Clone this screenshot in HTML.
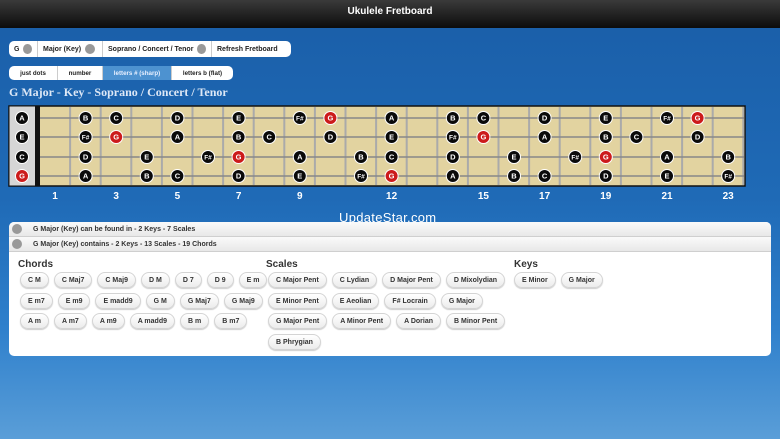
<!DOCTYPE html>
<html><head><meta charset="utf-8"><style>
*{margin:0;padding:0;box-sizing:border-box}
body{width:780px;height:439px;overflow:hidden;font-family:"Liberation Sans",Arial,sans-serif;background:linear-gradient(180deg,#1a5ea8 0%,#1f6ab6 45%,#2f80cc 75%,#5a9ed8 100%);position:relative}
.hdr{position:absolute;left:0;top:0;width:780px;height:28px;background:linear-gradient(#3a3a3a,#0c0c0c);color:#fff;font-weight:bold;font-size:10px;text-align:center;line-height:24px}
.bar{position:absolute;background:#fff;border-radius:5px;display:flex;align-items:center;font-size:7px;font-weight:bold;color:#222;overflow:hidden;white-space:nowrap}
.bar span{display:flex;align-items:center;height:100%;padding:0 5px;border-right:1px solid #ccc;white-space:nowrap;flex-shrink:0}
.bar span:last-child{border-right:none}
.dot{display:inline-block;width:10px;height:10px;border-radius:50%;background:#999;margin-left:4px}
.ttl{position:absolute;left:9px;top:85px;font-family:"Liberation Serif",serif;font-weight:bold;font-size:12px;color:#dde8f6}
.fn{position:absolute;top:191px;color:#fff;font-weight:bold;font-size:10px;width:20px;text-align:center}
.panel{position:absolute;left:9px;top:222px;width:762px;height:134px;background:#fff;border-radius:5px;overflow:hidden}
.row{height:15px;background:linear-gradient(#fafafa,#e8e8e8);border-bottom:1px solid #cfcfcf;font-size:7px;font-weight:bold;color:#333;display:flex;align-items:center}
.row i{display:inline-block;width:10px;height:10px;border-radius:50%;background:#999;margin:0 11px 0 3px}
h3{position:absolute;font-size:10px;color:#333;font-weight:bold}
.chips{position:absolute;font-size:7px;font-weight:bold;color:#333;white-space:nowrap}
.chips div{height:20.5px;display:flex}
.chips b{display:inline-block;flex-shrink:0;height:16px;line-height:15px;padding:0 7px;border:1px solid #d4d4d4;border-radius:8px;background:linear-gradient(#fff,#ececec);margin-right:5px;box-shadow:0 1px 1px #ccc}
.wm{position:absolute;left:339px;top:210px;font-size:13px;color:#fff;letter-spacing:.3px;z-index:3}
</style></head><body>
<div class="hdr">Ukulele Fretboard</div>
<div class="bar" style="left:9px;top:41px;width:282px;height:16px"><span style="width:29px">G<i class="dot"></i></span><span style="width:65px">Major (Key)<i class="dot"></i></span><span style="width:109px">Soprano / Concert / Tenor<i class="dot"></i></span><span style="flex:1;flex-shrink:1">Refresh Fretboard</span></div>
<div class="bar" style="left:9px;top:66px;width:224px;height:14px;font-size:6.2px"><span style="width:49px;justify-content:center">just dots</span><span style="width:45px;justify-content:center">number</span><span style="width:69px;justify-content:center;background:#4d92d0;color:#e8f0ff">letters # (sharp)</span><span style="flex:1;flex-shrink:1;justify-content:center">letters b (flat)</span></div>
<div class="ttl">G Major - Key - Soprano / Concert / Tenor</div>
<svg style="position:absolute;left:0;top:0" width="780" height="200" font-family="Liberation Sans,Arial,sans-serif" font-weight="bold" font-size="7.5">
<rect x="9" y="106" width="736" height="80" fill="#e2d3a0" stroke="#111" stroke-width="1.5"/>
<rect x="9.5" y="106.5" width="26" height="79" fill="#d6d6d6"/>
<rect x="35" y="106" width="5" height="80" fill="#111"/>
<g id="frets" stroke="#aaa" stroke-width="2"></g>
<g stroke="#888" stroke-width="1.5"><line x1="40" y1="118" x2="744" y2="118"/><line x1="40" y1="137" x2="744" y2="137"/><line x1="40" y1="157" x2="744" y2="157"/><line x1="40" y1="176" x2="744" y2="176"/></g>
<g id="notes" text-anchor="middle"></g>
</svg>
<div id="fnums"></div>
<div class="wm">UpdateStar.com</div>
<div class="panel">
<div class="row"><i></i>G Major (Key) can be found in - 2 Keys - 7 Scales</div>
<div class="row"><i></i>G Major (Key) contains - 2 Keys - 13 Scales - 19 Chords</div>
<h3 style="left:9px;top:37px">Chords</h3>
<div class="chips" style="left:11px;top:50px">
<div><b>C M</b><b>C Maj7</b><b>C Maj9</b><b>D M</b><b>D 7</b><b>D 9</b><b>E m</b></div>
<div><b>E m7</b><b>E m9</b><b>E madd9</b><b>G M</b><b>G Maj7</b><b>G Maj9</b></div>
<div><b>A m</b><b>A m7</b><b>A m9</b><b>A madd9</b><b>B m</b><b>B m7</b></div>
</div>
<h3 style="left:257px;top:37px">Scales</h3>
<div class="chips" style="left:259px;top:50px">
<div><b>C Major Pent</b><b>C Lydian</b><b>D Major Pent</b><b>D Mixolydian</b></div>
<div><b>E Minor Pent</b><b>E Aeolian</b><b>F# Locrain</b><b>G Major</b></div>
<div><b>G Major Pent</b><b>A Minor Pent</b><b>A Dorian</b><b>B Minor Pent</b></div>
<div><b>B Phrygian</b></div>
</div>
<h3 style="left:505px;top:37px">Keys</h3>
<div class="chips" style="left:505px;top:50px"><div><b>E Minor</b><b>G Major</b></div></div>
</div>
<script>
var f=document.getElementById('frets'),s='';
for(var k=1;k<=23;k++){var x=39.5+30.6*k;s+='<line x1="'+x+'" y1="107" x2="'+x+'" y2="185"/>';}
f.innerHTML=s;
var rows=[[118,'A',{2:'B',3:'C',5:'D',7:'E',9:'F#',10:'G',12:'A',14:'B',15:'C',17:'D',19:'E',21:'F#',22:'G'}],
[137,'E',{2:'F#',3:'G',5:'A',7:'B',8:'C',10:'D',12:'E',14:'F#',15:'G',17:'A',19:'B',20:'C',22:'D'}],
[157,'C',{2:'D',4:'E',6:'F#',7:'G',9:'A',11:'B',12:'C',14:'D',16:'E',18:'F#',19:'G',21:'A',23:'B'}],
[176,'G',{2:'A',4:'B',5:'C',7:'D',9:'E',11:'F#',12:'G',14:'A',16:'B',17:'C',19:'D',21:'E',23:'F#'}]];
var n='';
function c(x,y,t){var col=t=='G'?'#cc1b1b':'#0a0a0a';n+='<circle cx="'+x+'" cy="'+y+'" r="6.5" fill="'+col+'" stroke="#fff" stroke-width="1"/><text x="'+x+'" y="'+(y+2.7)+'" fill="#fff" font-size="'+(t.length>1?6.5:7.5)+'">'+t+'</text>';}
rows.forEach(function(r){c(22,r[0],r[1]);for(var k in r[2])c(55+(k-1)*30.6,r[0],r[2][k]);});
document.getElementById('notes').innerHTML=n;
var fn='';[1,3,5,7,9,12,15,17,19,21,23].forEach(function(k){fn+='<div class="fn" style="left:'+(45+(k-1)*30.6)+'px">'+k+'</div>';});
document.getElementById('fnums').innerHTML=fn;
</script>
</body></html>
